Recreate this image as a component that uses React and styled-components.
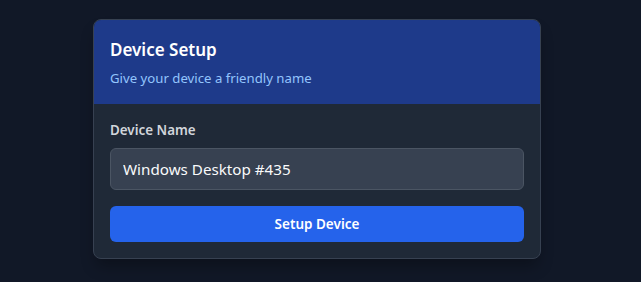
import styled, { createGlobalStyle } from "styled-components"

const GlobalStyle = createGlobalStyle`
  * {
    box-sizing: border-box;
  }
  body {
    margin: 0;
    background: #111827;
    font-family: "Noto Sans", "Open Sans", sans-serif;
  }
`

const Page = styled.div`
  min-height: 100vh;
  padding: 19px 0 0 93px;
`

const Card = styled.div`
  width: 448px;
  border: 1px solid #374151;
  border-radius: 8px;
  overflow: hidden;
  background: #1f2937;
  box-shadow: 0 10px 15px -3px rgba(0, 0, 0, 0.3);
`

const Header = styled.div`
  background: #1e3a8a;
  padding: 16px;
`

const Title = styled.h2`
  margin: 0;
  font-size: 17px;
  line-height: 28px;
  font-weight: 600;
  color: #ffffff;
`

const Subtitle = styled.p`
  margin: 4px 0 0;
  font-size: 13.2px;
  line-height: 20px;
  color: #93c5fd;
`

const Body = styled.div`
  display: flex;
  flex-direction: column;
  padding: 16px;
`

const Label = styled.label`
  font-size: 13.4px;
  line-height: 20px;
  font-weight: 600;
  color: #d1d5db;
  margin-bottom: 8px;
`

const Input = styled.input`
  height: 42px;
  padding: 8px 12px;
  border: 1px solid #4b5563;
  border-radius: 6px;
  background: #374151;
  color: #f9fafb;
  font-family: inherit;
  font-size: 15.2px;
  outline: none;
`

const Button = styled.button`
  margin-top: 16px;
  height: 36px;
  border: none;
  border-radius: 6px;
  background: #2563eb;
  color: #ffffff;
  font-family: inherit;
  font-size: 13.5px;
  font-weight: 600;
  cursor: pointer;
`

export default function App() {
  return (
    <>
      <GlobalStyle />
      <Page>
        <Card>
          <Header>
            <Title>Device Setup</Title>
            <Subtitle>Give your device a friendly name</Subtitle>
          </Header>
          <Body>
            <Label htmlFor="device-name">Device Name</Label>
            <Input id="device-name" defaultValue="Windows Desktop #435" />
            <Button>Setup Device</Button>
          </Body>
        </Card>
      </Page>
    </>
  )
}
